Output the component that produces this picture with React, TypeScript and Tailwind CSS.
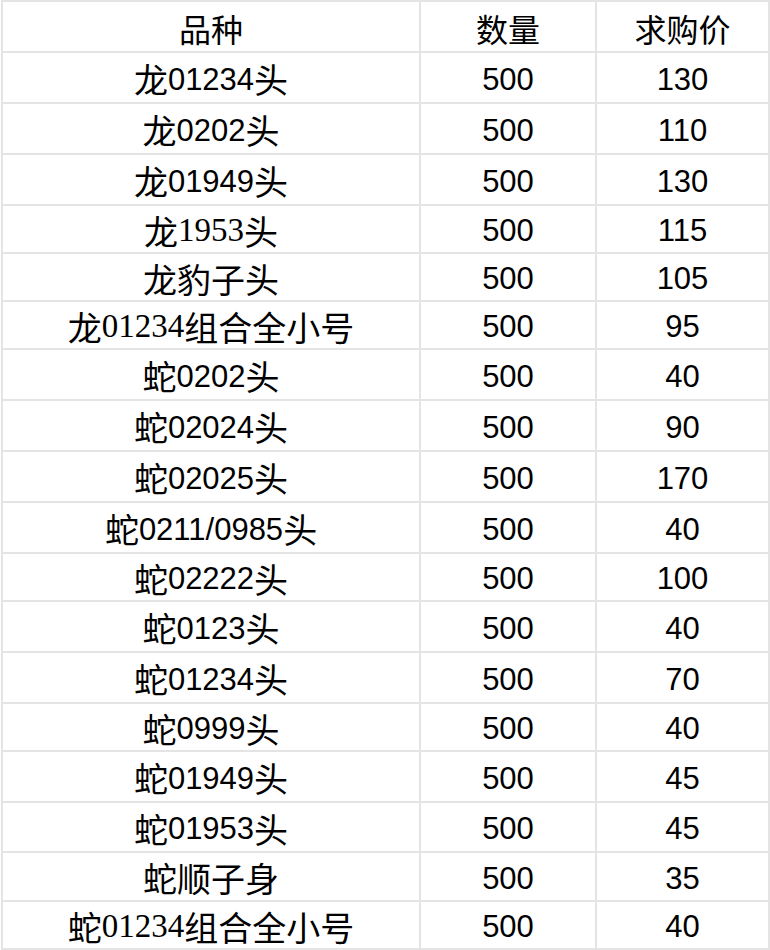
type Row = {
  name: (string | { serif: string })[];
  price: string;
  h: string;
};

const rows: Row[] = [
  { name: ["龙01234头"], price: "130", h: "h-[51px]" },
  { name: ["龙0202头"], price: "110", h: "h-[51px]" },
  { name: ["龙01949头"], price: "130", h: "h-[51px]" },
  { name: ["龙", { serif: "1953" }, "头"], price: "115", h: "h-[48px]" },
  { name: ["龙豹子头"], price: "105", h: "h-[48px]" },
  { name: ["龙", { serif: "01234" }, "组合全小号"], price: "95", h: "h-[48px]" },
  { name: ["蛇0202头"], price: "40", h: "h-[51px]" },
  { name: ["蛇02024头"], price: "90", h: "h-[51px]" },
  { name: ["蛇02025头"], price: "170", h: "h-[51px]" },
  { name: ["蛇0211/0985头"], price: "40", h: "h-[51px]" },
  { name: ["蛇02222头"], price: "100", h: "h-[48px]" },
  { name: ["蛇0123头"], price: "40", h: "h-[51px]" },
  { name: ["蛇01234头"], price: "70", h: "h-[51px]" },
  { name: ["蛇0999头"], price: "40", h: "h-[48px]" },
  { name: ["蛇01949头"], price: "45", h: "h-[51px]" },
  { name: ["蛇01953头"], price: "45", h: "h-[50px]" },
  { name: ["蛇顺子身"], price: "35", h: "h-[49px]" },
  { name: ["蛇", { serif: "01234" }, "组合全小号"], price: "40", h: "h-[48px]" },
];

// chinese glyphs come out a bit larger than the digits in the sheet
function Name({ parts }: { parts: Row["name"] }) {
  const out: React.ReactNode[] = [];
  parts.forEach((p, i) => {
    if (typeof p !== "string") {
      out.push(
        <span key={i} className="font-['Liberation_Serif',serif] text-[33px]">
          {p.serif}
        </span>
      );
      return;
    }
    const runs = p.match(/[\u4e00-\u9fff]+|[^\u4e00-\u9fff]+/g) ?? [];
    runs.forEach((run, j) => {
      const cjk = /[\u4e00-\u9fff]/.test(run);
      out.push(
        <span key={`${i}-${j}`} className={cjk ? "font-['Noto_Sans_CJK_SC',sans-serif] text-[34px]" : ""}>
          {run}
        </span>
      );
    });
  });
  return <>{out}</>;
}

const cell =
  "flex items-center justify-center border-r-2 border-b-2 border-[#e4e4e4] pt-[3px]";

export default function App() {
  return (
    <div className="w-[770px] h-[950px] bg-white overflow-hidden">
      <div className="ml-[1px] w-[769px] border-l-2 border-t-2 border-[#e4e4e4] text-black font-['Liberation_Sans','Noto_Sans_CJK_SC',sans-serif] text-[31px] leading-none">
        <div className="flex h-[51px] font-['Noto_Sans_CJK_SC',sans-serif] text-[32px]">
          <div className={`${cell} w-[418px]`}>品种</div>
          <div className={`${cell} w-[176px]`}>数量</div>
          <div className={`${cell} w-[173px]`}>求购价</div>
        </div>
        {rows.map((r, i) => (
          <div key={i} className={`flex ${r.h}`}>
            <div className={`${cell} w-[418px]`}>
              <Name parts={r.name} />
            </div>
            <div className={`${cell} w-[176px]`}>500</div>
            <div className={`${cell} w-[173px]`}>{r.price}</div>
          </div>
        ))}
      </div>
    </div>
  );
}
